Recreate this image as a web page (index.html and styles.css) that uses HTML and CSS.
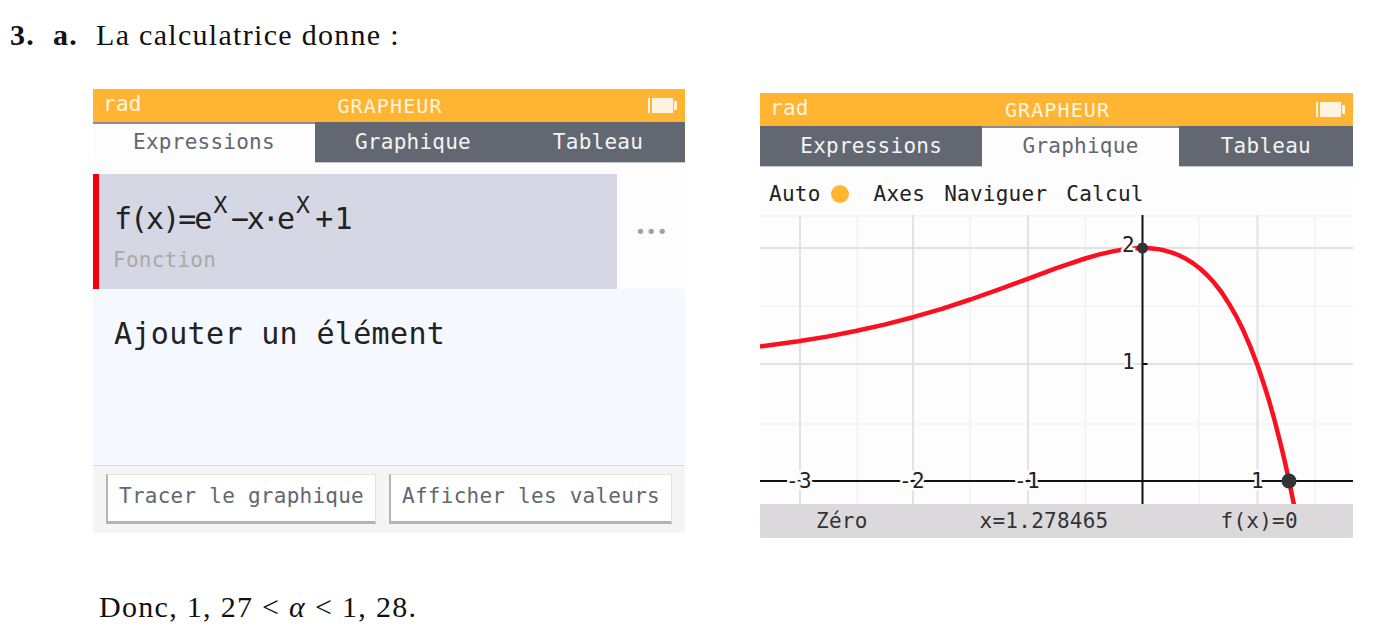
FILE: index.html
```html
<!DOCTYPE html>
<html lang="fr">
<head>
  <meta charset="UTF-8" />
  <title>La calculatrice donne</title>
  <link rel="stylesheet" href="styles.css">
</head>
<body>
  <div class="question">
    <strong class="num">3.</strong>
    <strong class="sub">a.</strong>
    <span>La calculatrice donne :</span>
  </div>

  <div class="shots">
    <!-- expressions screen -->
    <div class="screen screen-left">
      <div class="top-bar">
        <span class="rad">rad</span>
        <span class="title">GRAPHEUR</span>
        <svg class="battery" viewBox="0 0 29 15"><path d="M0 0h2v15H0zM4 0h21v15H4zM26 3h3v9h-3z"/></svg>
      </div>
      <div class="tabs">
        <div class="tab active">Expressions</div>
        <div class="tab">Graphique</div>
        <div class="tab">Tableau</div>
      </div>
      <div class="list">
        <div class="func-row">
          <div class="func-main">
            <div class="formula">f(x)=e<sup>X</sup>−x<span class="dot-op">·</span>e<sup>X</sup><span class="tail">+1</span></div>
            <div class="func-type">Fonction</div>
          </div>
          <div class="func-more">•••</div>
        </div>
        <div class="add-row">Ajouter un élément</div>
      </div>
      <div class="actions">
        <div class="action">Tracer le graphique</div>
        <div class="action">Afficher les valeurs</div>
      </div>
    </div>

    <!-- graph screen -->
    <div class="screen screen-right">
      <div class="top-bar">
        <span class="rad">rad</span>
        <span class="title">GRAPHEUR</span>
        <svg class="battery" viewBox="0 0 29 15"><path d="M0 0h2v15H0zM4 0h21v15H4zM26 3h3v9h-3z"/></svg>
      </div>
      <div class="tabs">
        <div class="tab">Expressions</div>
        <div class="tab active">Graphique</div>
        <div class="tab">Tableau</div>
      </div>
      <div class="toolbar">
        <span>Auto</span>
        <span class="auto-dot"></span>
        <span class="axes-btn">Axes</span>
        <span class="nav-btn">Naviguer</span>
        <span class="nav-btn">Calcul</span>
      </div>
      <svg class="graph" viewBox="0 0 593 289">
        <path class="grid-minor" d="M0 1H593M0 91H593M0 209H593M97.5 0V289M210 0V289M325.5 0V289M439 0V289M555 0V289"/>
        <path class="grid-major" d="M0 33H593M0 149H593M40 0V289M153 0V289M268 0V289M497.5 0V289"/>
        <path class="axis" d="M0 266H593M382.5 0V289M382.5 149h5M382.5 33h5"/>
        <polyline class="curve" points="0,131.5 38.4,126.3 67.1,121.6 95.7,116 124.4,109.6 153.1,102.2 181.8,93.8 210.4,84.5 239.1,74.4 267.8,63.8 296.5,53.2 325.2,43.5 339.5,39.4 353.8,36.1 368.2,33.8 382.5,33 389.7,33.2 396.8,33.9 404,35.3 411.2,37.3 418.3,40 425.5,43.6 432.7,48 439.9,53.5 447,60 454.2,67.8 461.4,77 468.5,87.9 475.7,100.3 482.9,114.6 490,130.9 497.2,149.5 502.9,166.2 508.7,184.5 514.4,204.7 520.1,226.9 524.7,246 529.1,266 535,294.9"/>
        <circle class="point" cx="382.5" cy="33" r="5.5"/>
        <circle class="point" cx="529" cy="266" r="7.5"/>
        <text class="label" x="26" y="273">-3</text>
        <text class="label" x="139" y="273">-2</text>
        <text class="label" x="254" y="273">-1</text>
        <text class="label" x="491" y="273">1</text>
        <text class="label" x="362" y="154">1</text>
        <text class="label" x="362" y="37">2</text>
      </svg>
      <div class="status">
        <span>Zéro</span>
        <span>x=1.278465</span>
        <span>f(x)=0</span>
      </div>
    </div>
  </div>

  <p class="conclusion">Donc, 1, 27 &lt; <i>α</i> &lt; 1, 28.</p>
</body>
</html>
```

FILE: styles.css
```css
html, body {
  height: 100%;
}

body {
  margin: 0;
  background: #fff;
  color: #111;
  font-family: "Liberation Serif", serif;
  font-size: 30px;
  letter-spacing: 1.3px;
  overflow: hidden;
}

.question {
  display: flex;
  height: 89px;
  padding: 17px 0 0 10px;
  box-sizing: border-box;
  line-height: 36px;
}

.num {
  width: 43px;
}

.sub {
  width: 43px;
}

.shots {
  display: flex;
  align-items: flex-start;
  gap: 75px;
  padding-left: 93px;
}

.screen {
  display: flex;
  flex-direction: column;
  background: #fdfdfd;
  font-family: "DejaVu Sans Mono", monospace;
  font-size: 21px;
  letter-spacing: 0.25px;
}

.screen-left {
  width: 592px;
}

.screen-right {
  width: 593px;
  margin-top: 4px;
}

.top-bar {
  display: grid;
  grid-template-columns: 1fr auto 1fr;
  align-items: center;
  height: 33px;
  padding: 0 8px 0 10px;
  background: #ffb531;
  color: #fff4e0;
}

.rad {
  padding-bottom: 3px;
}

.title {
  font-size: 20px;
  letter-spacing: 1.1px;
}

.battery {
  justify-self: end;
  width: 29px;
  height: 15px;
  fill: #fff4e0;
}

.tabs {
  display: grid;
  grid-template-columns: 222fr 196fr 174fr;
  height: 41px;
}

.tab {
  display: flex;
  align-items: center;
  justify-content: center;
  padding-bottom: 1px;
  background: #626771;
  border-bottom: 1px solid #c4c7cc;
  color: #f4f4f4;
}

.tab.active {
  padding-bottom: 4px;
  background: #fdfdfd;
  border-top: 2px solid #8d8d8d;
  border-bottom: none;
  color: #626771;
}

.list {
  padding-top: 11px;
}

.func-row {
  display: flex;
  height: 115px;
}

.func-main {
  width: 524px;
  box-sizing: border-box;
  padding: 14px 0 0 14px;
  background: #d5d7e5;
  border-left: 6px solid #f5000f;
}

.formula {
  padding-left: 1px;
  height: 60px;
  color: #222;
  font-size: 30px;
  line-height: 62px;
  letter-spacing: -2px;
}

.formula sup {
  margin-left: 3px;
  font-size: 23px;
  line-height: 0;
  letter-spacing: 3.5px;
  vertical-align: 16px;
}

.dot-op {
  margin: 0 -1px;
}

.tail {
  margin-left: 2px;
  letter-spacing: 1px;
}

.func-type {
  color: #a9a9a9;
}

.func-more {
  flex: 1;
  padding: 46px 0 0 18px;
  color: #a0a0a0;
  font-size: 18px;
  line-height: 24px;
  letter-spacing: 0;
}

.add-row {
  height: 176px;
  box-sizing: border-box;
  padding: 25px 0 0 21px;
  background: #f5f8fe;
  color: #222;
  font-size: 30px;
  line-height: 40px;
  letter-spacing: 0.34px;
}

.actions {
  display: flex;
  gap: 13px;
  height: 68px;
  box-sizing: border-box;
  padding: 8px 13px 9px;
  background: #f5f5f5;
  border-top: 1px solid #dcdcdc;
}

.action {
  flex: 1 1 auto;
  display: flex;
  align-items: center;
  justify-content: center;
  padding-bottom: 4px;
  background: #fff;
  border: 1px solid #e2e2e2;
  border-left: 2px solid #b4b4b4;
  border-bottom: 3px solid #b4b4b4;
  color: #626771;
}

.toolbar {
  display: flex;
  align-items: center;
  height: 48px;
  padding: 5px 0 0 9px;
  box-sizing: border-box;
  color: #222;
}

.auto-dot {
  width: 18px;
  height: 18px;
  margin: 0 25px 0 10px;
  border-radius: 50%;
  background: #ffb531;
}

.nav-btn {
  margin-left: 19px;
}

.graph {
  display: block;
  width: 593px;
  height: 289px;
}

.grid-minor {
  fill: none;
  stroke: #f5f4f6;
  stroke-width: 2;
}

.grid-major {
  fill: none;
  stroke: #e4e1e5;
  stroke-width: 2;
}

.axis {
  fill: none;
  stroke: #111;
  stroke-width: 2;
}

.curve {
  fill: none;
  stroke: #fa1020;
  stroke-width: 4.5;
  stroke-linejoin: round;
}

.point {
  fill: #333;
}

.label {
  fill: #222;
  stroke: #fdfdfd;
  stroke-width: 5px;
  paint-order: stroke;
}

.status {
  display: flex;
  gap: 112px;
  align-items: center;
  height: 34px;
  padding-left: 56px;
  background: #dcd9dd;
  color: #333;
}

.conclusion {
  margin: 0;
  padding: 51px 0 0 99px;
  line-height: 36px;
}
```
